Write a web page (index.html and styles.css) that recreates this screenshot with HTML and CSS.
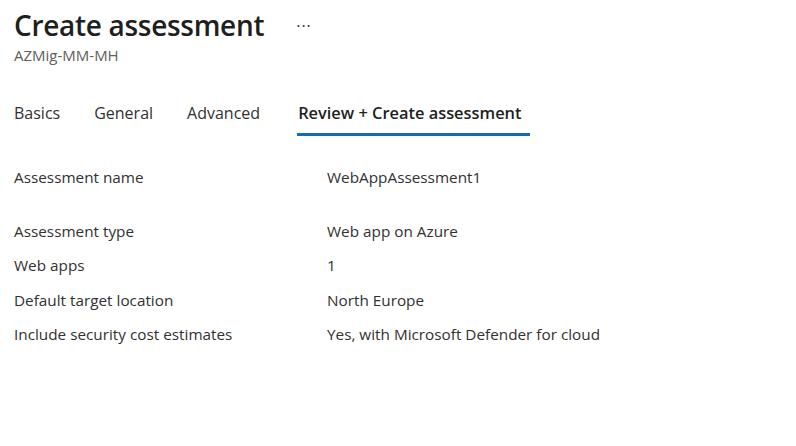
FILE: index.html
```html
<!DOCTYPE html>
<html>
<head>
<meta charset="utf-8">
<link rel="stylesheet" href="styles.css">
</head>
<body>
<div class="page">
  <header class="header">
    <div class="title-row">
      <h1 class="title">Create assessment</h1>
      <span class="more">&middot;&middot;&middot;</span>
    </div>
    <div class="subtitle">AZMig-MM-MH</div>
  </header>
  <nav class="tabs">
    <span class="tab">Basics</span>
    <span class="tab">General</span>
    <span class="tab">Advanced</span>
    <span class="tab active">Review + Create assessment</span>
  </nav>
  <div class="details">
    <div class="row"><span class="label">Assessment name</span><span class="value">WebAppAssessment1</span></div>
    <div class="row gap"><span class="label">Assessment type</span><span class="value">Web app on Azure</span></div>
    <div class="row"><span class="label">Web apps</span><span class="value">1</span></div>
    <div class="row"><span class="label">Default target location</span><span class="value">North Europe</span></div>
    <div class="row"><span class="label">Include security cost estimates</span><span class="value">Yes, with Microsoft Defender for cloud</span></div>
  </div>
</div>
</body>
</html>
```
FILE: styles.css
```css
html, body { margin: 0; padding: 0; background: #fff; }
body { font-family: "Open Sans", "Noto Sans", sans-serif; color: #323130; }
.page { padding: 0 14px; }
.header { padding-top: 5px; }
.title-row { display: flex; align-items: center; gap: 32px; height: 40px; }
.title { margin: 0; font-size: 28px; font-weight: 600; color: #201f1e; letter-spacing: -0.3px; line-height: 40px; }
.more { font-size: 16px; color: #323130; letter-spacing: 1px; margin-top: 2px; }
.subtitle { font-size: 15px; color: #605e5c; line-height: 20px; margin-top: 0; }
.tabs { display: flex; gap: 34px; margin-top: 34px; height: 37px; }
.tab { font-size: 16px; line-height: 22px; padding-top: 3px; color: #323130; box-sizing: border-box; height: 37px; }
.tab.active { font-size: 16.4px; font-weight: 600; border-bottom: 3px solid #0f6cbd; padding: 3px 8px 0 1px; margin-left: 3px; color: #201f1e; }
.details { display: flex; flex-direction: column; gap: 14.5px; margin-top: 31px; }
.row { display: flex; font-size: 15.3px; line-height: 20px; }
.row.gap { margin-top: 19px; }
.label { width: 313px; flex-shrink: 0; }
```
